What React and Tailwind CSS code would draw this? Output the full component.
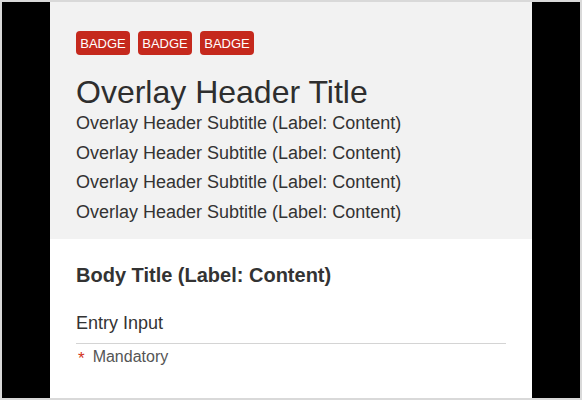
import React from 'react';

const Badge = ({ children }) => (
    <span className="inline-flex items-center justify-center w-[54px] h-[24px] rounded-[4px] bg-[#c5291d] text-white text-[13px] leading-none">
        {children}
    </span>
);

const App = () => {
    const subtitles = [1, 2, 3, 4];

    return (
        <div className="w-[582px] h-[400px] border-2 border-[#d9d9d9] bg-black px-12 font-['Liberation_Sans',Arial,sans-serif] text-[#333333]">
            <div className="h-full bg-white flex flex-col">
                <div className="bg-[#f2f2f2] px-[26px] pt-[29px] pb-[12px]">
                    <div className="flex gap-2">
                        <Badge>BADGE</Badge>
                        <Badge>BADGE</Badge>
                        <Badge>BADGE</Badge>
                    </div>
                    <h1 className="mt-[19px] text-[32px] leading-[36px] font-normal text-[#2e2e2e]">Overlay Header Title</h1>
                    <div className="mt-[-1px]">
                        {subtitles.map((n) => (
                            <p key={n} className="text-[18px] leading-[29.5px]">
                                Overlay Header Subtitle (Label: Content)
                            </p>
                        ))}
                    </div>
                </div>
                <div className="px-[26px] pt-[23px]">
                    <h2 className="text-[20px] leading-[26px] font-bold">Body Title (Label: Content)</h2>
                    <div className="mt-[24px] text-[18px] leading-[22px] pb-[9px] border-b border-[#d4d4d4]">Entry Input</div>
                    <div className="mt-[3px] flex items-center gap-[8px] text-[16px] leading-[20px] text-[#555555]">
                        <span className="pl-[2px] text-[17px] translate-y-[2px] text-[#d23222]">*</span>
                        <span>Mandatory</span>
                    </div>
                </div>
            </div>
        </div>
    );
};

export default App;
